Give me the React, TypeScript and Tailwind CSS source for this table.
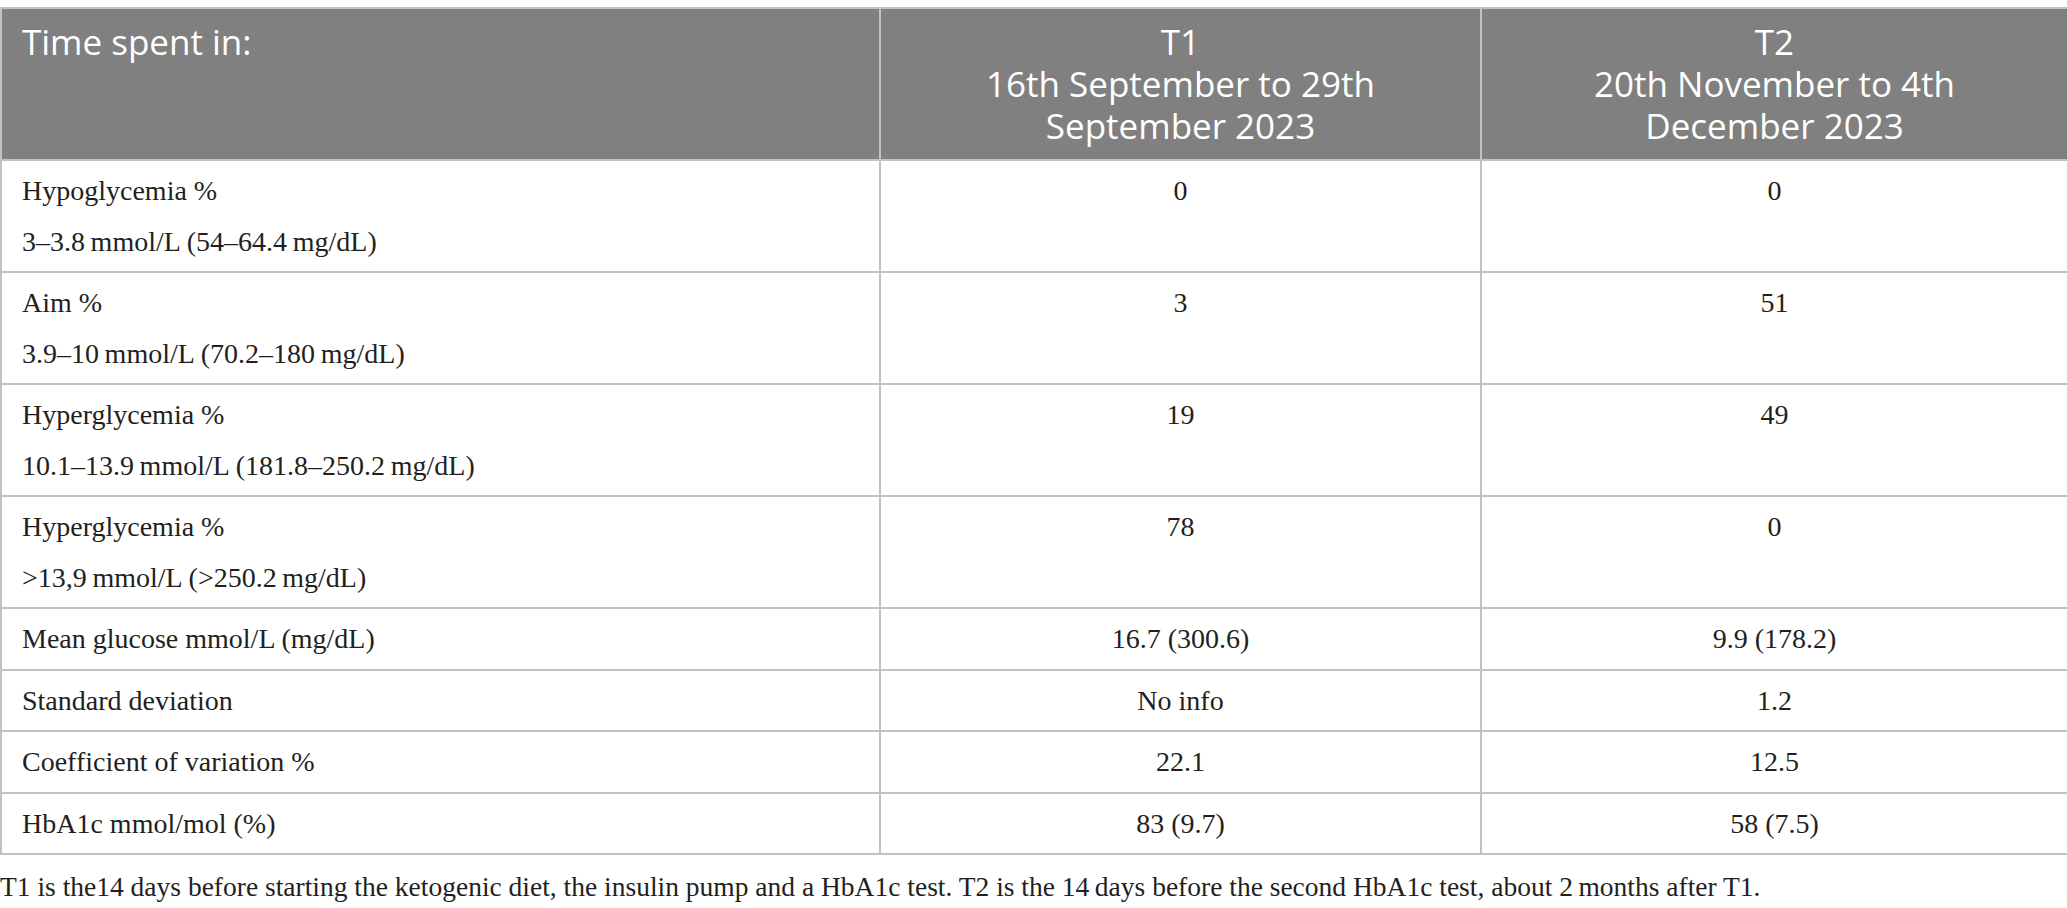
import React from "react";

const serif = "font-['Liberation_Serif','Times_New_Roman',serif]";

const rows = [
  { label: "Hypoglycemia %", sub: "3–3.8\u2009mmol/L (54–64.4\u2009mg/dL)", t1: "0", t2: "0" },
  { label: "Aim %", sub: "3.9–10\u2009mmol/L (70.2–180\u2009mg/dL)", t1: "3", t2: "51" },
  { label: "Hyperglycemia %", sub: "10.1–13.9\u2009mmol/L (181.8–250.2\u2009mg/dL)", t1: "19", t2: "49" },
  { label: "Hyperglycemia %", sub: ">13,9\u2009mmol/L (>250.2\u2009mg/dL)", t1: "78", t2: "0" },
  { label: "Mean glucose mmol/L (mg/dL)", t1: "16.7 (300.6)", t2: "9.9 (178.2)" },
  { label: "Standard deviation", t1: "No info", t2: "1.2" },
  { label: "Coefficient of variation %", t1: "22.1", t2: "12.5" },
  { label: "HbA1c mmol/mol (%)", t1: "83 (9.7)", t2: "58 (7.5)" },
];

export default function App() {
  return (
    <div className="w-[2067px] h-[908px] bg-white pt-[7px] overflow-hidden">
      <table className="w-[2067px] table-fixed border-collapse">
        <colgroup>
          <col className="w-[879px]" />
          <col className="w-[601px]" />
          <col className="w-[587px]" />
        </colgroup>
        <thead>
          <tr className="bg-[#7f807f] text-white font-['Open_Sans',sans-serif] text-[35px] leading-[42px]">
            <th className="border-2 border-[#c2c2c2] align-top text-left font-normal pl-[20px] pt-[12px] pb-[12px]">
              Time spent in:
            </th>
            <th className="border-2 border-[#c2c2c2] align-top text-center font-normal px-[10px] pt-[12px] pb-[12px]">
              T1
              <br />
              16th September to 29th
              <br />
              September 2023
            </th>
            <th className="border-2 border-[#c2c2c2] align-top text-center font-normal px-[10px] pt-[12px] pb-[12px]">
              T2
              <br />
              20th November to 4th
              <br />
              December 2023
            </th>
          </tr>
        </thead>
        <tbody className={`${serif} text-[28px] leading-[50.5px] text-[#231f20]`}>
          {rows.map((r, i) => (
            <tr key={i}>
              <td className="border-2 border-[#c2c2c2] align-top px-[20px] pt-[5px] pb-[4px]">
                <div>{r.label}</div>
                {r.sub && <div>{r.sub}</div>}
              </td>
              <td className="border-2 border-[#c2c2c2] align-top text-center pt-[5px] pb-[4px]">{r.t1}</td>
              <td className="border-2 border-[#c2c2c2] align-top text-center pt-[5px] pb-[4px]">{r.t2}</td>
            </tr>
          ))}
        </tbody>
      </table>
      <p className={`${serif} text-[27.5px] leading-[36px] text-[#231f20] mt-[14px]`}>
        T1 is the14 days before starting the ketogenic diet, the insulin pump and a HbA1c test. T2 is the 14{"\u2009"}days
        before the second HbA1c test, about 2{"\u2009"}months after T1.
      </p>
    </div>
  );
}
